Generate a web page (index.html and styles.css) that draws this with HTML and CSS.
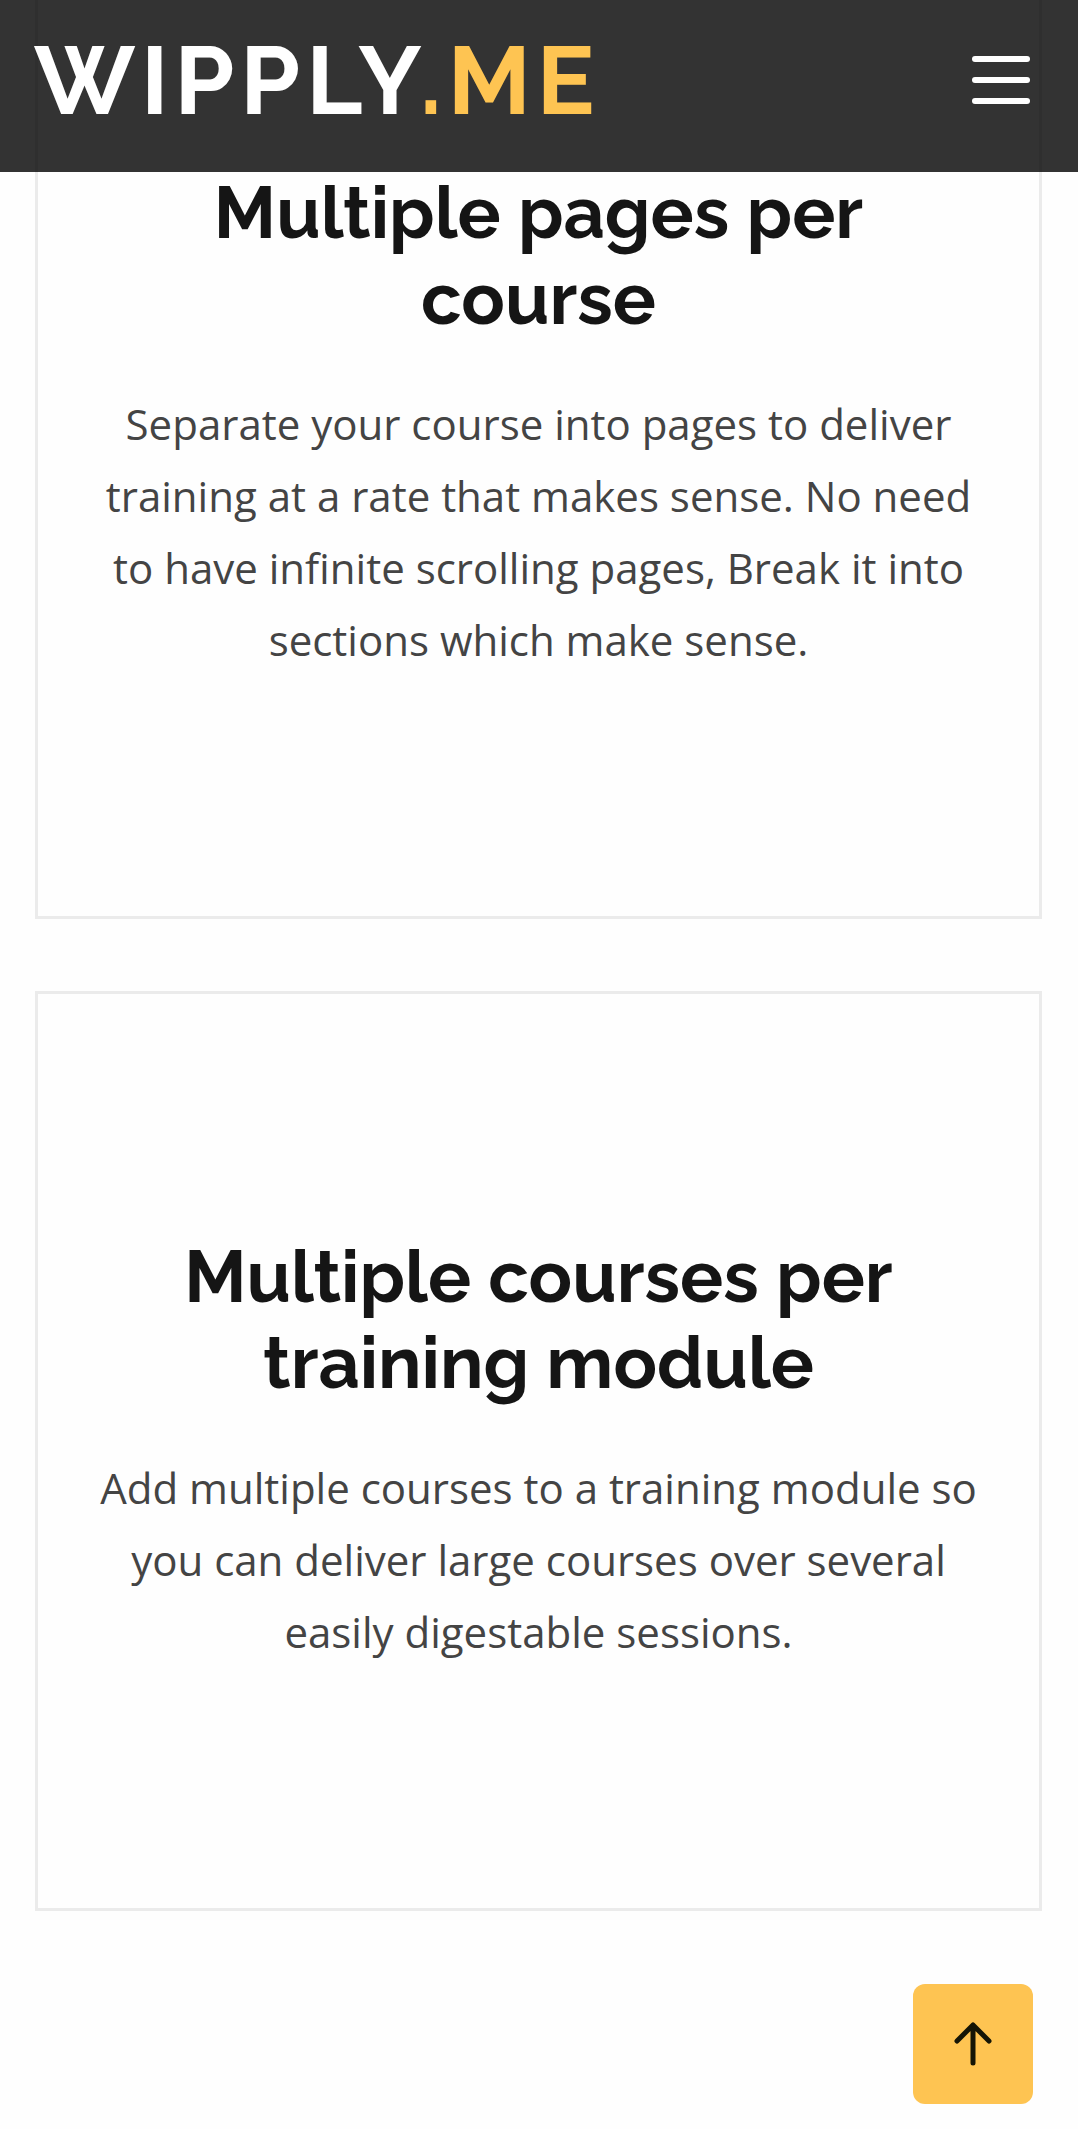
FILE: index.html
```html
<!DOCTYPE html>
<html lang="en">
<head>
  <meta charset="utf-8">
  <meta name="viewport" content="width=device-width, initial-scale=1">
  <title>Wipply.me</title>
  <link rel="stylesheet" href="styles.css">
</head>
<body>
  <header class="site-header">
    <a class="logo" href="#">WIPPLY<span class="logo-accent">.ME</span></a>
    <button class="menu-button" type="button" aria-label="Open menu">
      <span class="menu-bar"></span>
      <span class="menu-bar"></span>
      <span class="menu-bar"></span>
    </button>
  </header>
  <main class="features">
    <article class="card">
      <h2 class="card-title">Multiple pages per course</h2>
      <p class="card-text">Separate your course into pages to deliver training at a rate that makes sense. No need to have infinite scrolling pages, Break it into sections which make sense.</p>
    </article>
    <article class="card">
      <h2 class="card-title">Multiple courses per training module</h2>
      <p class="card-text">Add multiple courses to a training module so you can deliver large courses over several easily digestable sessions.</p>
    </article>
  </main>
  <a class="to-top" href="#" aria-label="Back to top">
    <svg class="to-top-icon" viewBox="0 0 38 44" aria-hidden="true">
      <path d="M19 41V3M3 19 19 3l16 16"/>
    </svg>
  </a>
</body>
</html>
```
FILE: styles.css
```css
* {
  box-sizing: border-box;
}

body {
  margin: 0;
  background: #fefefe;
  font-family: "Open Sans", sans-serif;
}

.site-header {
  position: fixed;
  top: 0;
  left: 0;
  right: 0;
  z-index: 10;
  display: flex;
  align-items: center;
  justify-content: space-between;
  padding: 22px 48px 34px 34px;
  background: rgba(0, 0, 0, 0.8);
}

.logo {
  color: #fff;
  font-family: Raleway, Lato, sans-serif;
  font-size: 96px;
  font-weight: 700;
  line-height: 116px;
  letter-spacing: 6px;
  text-decoration: none;
}

.logo-accent {
  color: #fec452;
}

.menu-button {
  display: flex;
  flex-direction: column;
  gap: 15px;
  width: 58px;
  padding: 0;
  border: 0;
  background: none;
}

.menu-bar {
  height: 6px;
  border-radius: 3px;
  background: #fff;
}

/* The first card starts above the fold, behind the translucent header. */
.features {
  display: grid;
  gap: 72px;
  margin-top: -73px;
  padding: 0 36px 218px 35px;
}

.card {
  padding: 240px 54px;
  border: 3px solid #ebebeb;
  text-align: center;
}

.card-title {
  margin: 0 0 46px;
  color: #151515;
  font-family: Raleway, Lato, sans-serif;
  font-size: 72px;
  font-weight: 700;
  line-height: 86px;
}

.card-text {
  margin: 0;
  color: #444;
  font-size: 42px;
  line-height: 72px;
}

.to-top {
  position: fixed;
  right: 45px;
  bottom: 25px;
  display: flex;
  align-items: center;
  justify-content: center;
  width: 120px;
  height: 120px;
  border-radius: 12px;
  background: #fec452;
}

.to-top-icon {
  width: 38px;
  height: 44px;
  fill: none;
  stroke: #151505;
  stroke-width: 5;
  stroke-linecap: round;
  stroke-linejoin: round;
}
```
